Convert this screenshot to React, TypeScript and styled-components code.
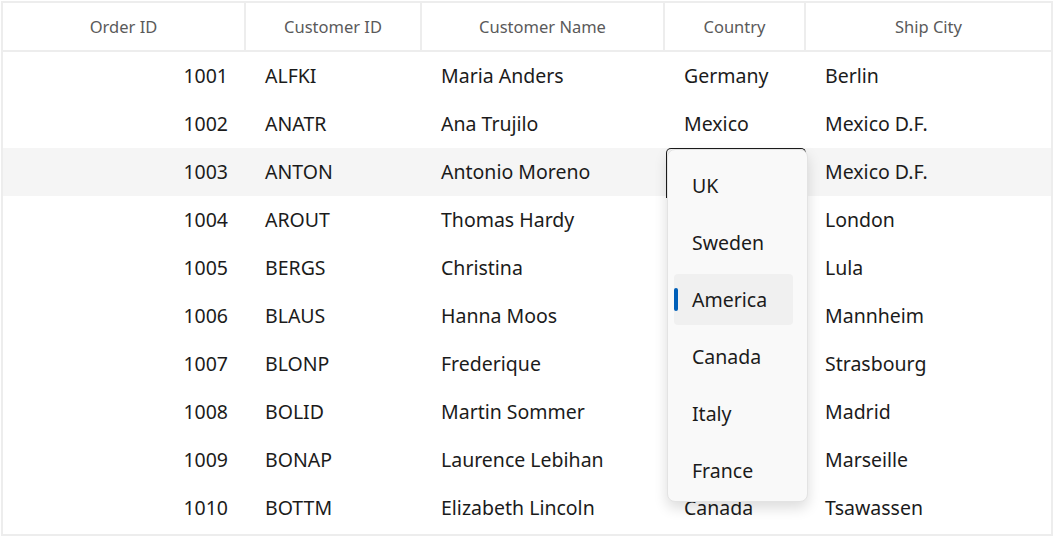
import React from "react";
import styled, { createGlobalStyle } from "styled-components";

const GlobalStyle = createGlobalStyle`
  html, body {
    margin: 0;
    padding: 0;
    background: #ffffff;
  }
  body {
    font-family: "Noto Sans", "Open Sans", sans-serif;
  }
`;

type Order = {
  id: number;
  customerId: string;
  name: string;
  country: string;
  city: string;
};

const orders: Order[] = [
  { id: 1001, customerId: "ALFKI", name: "Maria Anders", country: "Germany", city: "Berlin" },
  { id: 1002, customerId: "ANATR", name: "Ana Trujilo", country: "Mexico", city: "Mexico D.F." },
  { id: 1003, customerId: "ANTON", name: "Antonio Moreno", country: "Mexico", city: "Mexico D.F." },
  { id: 1004, customerId: "AROUT", name: "Thomas Hardy", country: "UK", city: "London" },
  { id: 1005, customerId: "BERGS", name: "Christina", country: "Sweden", city: "Lula" },
  { id: 1006, customerId: "BLAUS", name: "Hanna Moos", country: "Germany", city: "Mannheim" },
  { id: 1007, customerId: "BLONP", name: "Frederique", country: "France", city: "Strasbourg" },
  { id: 1008, customerId: "BOLID", name: "Martin Sommer", country: "Spain", city: "Madrid" },
  { id: 1009, customerId: "BONAP", name: "Laurence Lebihan", country: "France", city: "Marseille" },
  { id: 1010, customerId: "BOTTM", name: "Elizabeth Lincoln", country: "Canada", city: "Tsawassen" },
];

const countries = ["UK", "Sweden", "America", "Canada", "Italy", "France"];

// row whose Country cell is open for editing
const EDIT_ROW = 2;
// rows hidden behind the open dropdown list
const isUnderList = (i: number) => i > EDIT_ROW && i < orders.length - 1;

const Frame = styled.div`
  padding: 1px 0 0 1px;
  width: 1052px;
`;

const Grid = styled.div`
  position: relative;
  width: 1048px;
  height: 531px;
  border: 2px solid #ededed;
  overflow: hidden;
`;

const Columns = "243px 176px 243px 141px 1fr";

const HeaderRow = styled.div`
  display: grid;
  grid-template-columns: ${Columns};
  height: 47px;
  border-bottom: 2px solid #ededed;
`;

const HeaderCell = styled.div<{ $last?: boolean }>`
  display: flex;
  align-items: center;
  justify-content: center;
  font-size: 16.5px;
  color: #5a5a5a;
  border-right: ${(p) => (p.$last ? "none" : "2px solid #ededed")};
`;

const Row = styled.div<{ $active?: boolean }>`
  display: grid;
  grid-template-columns: ${Columns};
  height: 48px;
  background: ${(p) => (p.$active ? "#f5f5f5" : "transparent")};
`;

const Cell = styled.div<{ $right?: boolean; $covered?: boolean }>`
  display: flex;
  align-items: center;
  justify-content: ${(p) => (p.$right ? "flex-end" : "flex-start")};
  padding: 0 18px 2px 19px;
  font-size: 19.5px;
  color: #1b1b1b;
  white-space: nowrap;
  visibility: ${(p) => (p.$covered ? "hidden" : "visible")};
`;

const EditorCell = styled.div`
  margin: 0 0 -2px 1px;
  border: 1.5px solid #1b1b1b;
  border-bottom: none;
  border-radius: 5px 5px 0 0;
`;

const Popup = styled.div`
  position: absolute;
  left: 664px;
  top: 146px;
  width: 141px;
  height: 353px;
  box-sizing: border-box;
  padding: 10px 14px 6px 6px;
  display: flex;
  flex-direction: column;
  gap: 6px;
  background: #f9f9f9;
  border: 1px solid #e3e3e3;
  border-radius: 8px;
  box-shadow: 0 6px 14px rgba(0, 0, 0, 0.14);
`;

const Option = styled.div<{ $selected?: boolean }>`
  position: relative;
  height: 51px;
  flex: none;
  display: flex;
  align-items: center;
  padding-left: 18px;
  font-size: 19.5px;
  color: #1b1b1b;
  border-radius: 4px;
  background: ${(p) => (p.$selected ? "#f0f0f0" : "transparent")};

  &::before {
    content: "";
    display: ${(p) => (p.$selected ? "block" : "none")};
    position: absolute;
    left: 0;
    top: 14px;
    width: 4px;
    height: 23px;
    border-radius: 2px;
    background: #005fb8;
  }
`;

const headers = ["Order ID", "Customer ID", "Customer Name", "Country", "Ship City"];

export default function App() {
  return (
    <Frame>
      <GlobalStyle />
      <Grid>
        <HeaderRow>
          {headers.map((h, i) => (
            <HeaderCell key={h} $last={i === headers.length - 1}>
              {h}
            </HeaderCell>
          ))}
        </HeaderRow>
        {orders.map((o, i) => (
          <Row key={o.id} $active={i === EDIT_ROW}>
            <Cell $right>{o.id}</Cell>
            <Cell>{o.customerId}</Cell>
            <Cell>{o.name}</Cell>
            {i === EDIT_ROW ? (
              <EditorCell />
            ) : (
              <Cell $covered={isUnderList(i)}>{o.country}</Cell>
            )}
            <Cell>{o.city}</Cell>
          </Row>
        ))}
        <Popup>
          {countries.map((c) => (
            <Option key={c} $selected={c === "America"}>
              {c}
            </Option>
          ))}
        </Popup>
      </Grid>
    </Frame>
  );
}
